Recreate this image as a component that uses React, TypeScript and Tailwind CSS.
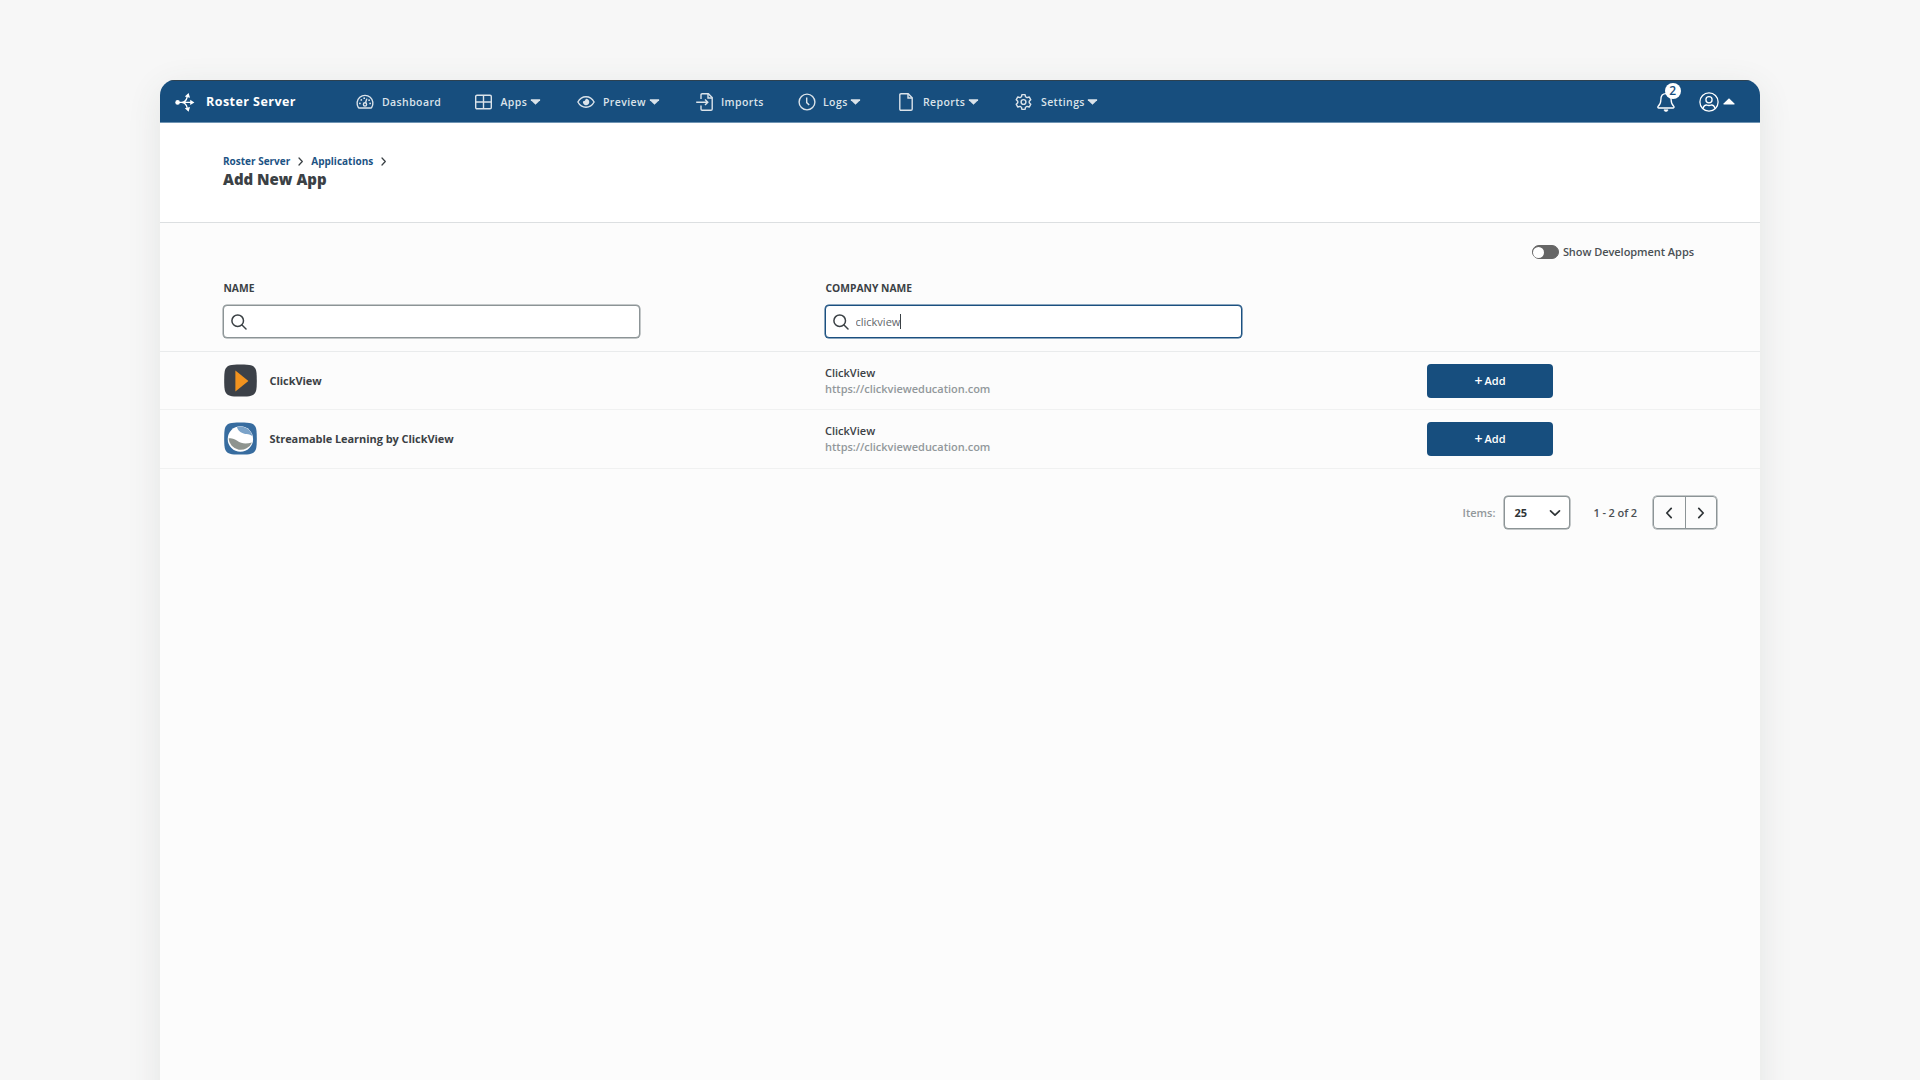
import { useState } from "react";
import type { ReactNode } from "react";
import clsx from "clsx";

interface NavItem {
  label: string;
  icon: ReactNode;
  hasMenu?: boolean;
  width: string;
  iconBox: string;
}

interface AppRow {
  name: string;
  company: string;
  url: string;
  logo: ReactNode;
}

function Caret({ up = false, className }: { up?: boolean; className?: string }) {
  return (
    <svg viewBox="0 0 12 7" className={clsx("shrink-0", className)} fill="currentColor">
      {up ? (
        <path d="M6 0.2 11.4 5.4Q11.8 6.6 11 6.6H1Q0.2 6.6 0.6 5.4Z" />
      ) : (
        <path d="M6 6.8 0.6 1.6Q0.2 0.4 1 0.4H11Q11.8 0.4 11.4 1.6Z" />
      )}
    </svg>
  );
}

function Chevron({ d, className }: { d: string; className?: string }) {
  return (
    <svg
      viewBox="0 0 12 12"
      className={clsx("shrink-0", className)}
      fill="none"
      stroke="currentColor"
      strokeWidth="1.7"
      strokeLinecap="round"
      strokeLinejoin="round"
    >
      <path d={d} />
    </svg>
  );
}

const RIGHT = "M4 1.4 8.4 6 4 10.6";

function BrandIcon() {
  return (
    <svg width="20" height="20" viewBox="0 0 20 20" fill="none" stroke="white" strokeWidth="1.3">
      <path d="M3 10.4H16M6.8 10.4C10 10 11.4 8.4 12.2 5M6.8 10.4C10 10.8 11.4 12.4 12.2 15.8" />
      <circle cx="2.6" cy="10.4" r="2.3" fill="white" stroke="none" />
      <path
        d="M9.8 4.6 13.6 1 15 5.8ZM9.8 16.2 13.6 19.8 15 15ZM15.2 7.7 19.4 10.4 15.2 13.1Z"
        fill="white"
        stroke="none"
      />
    </svg>
  );
}

function DashboardIcon() {
  return (
    <svg width="18" height="15" viewBox="0 0 18 15" fill="none" stroke="currentColor" strokeWidth="1.4">
      <path d="M2.4 13.6A7.9 7.9 0 1 1 15.6 13.6Q15.4 14 14.9 14H3.1Q2.6 14 2.4 13.6Z" />
      <circle cx="9" cy="10.4" r="1.6" />
      <path d="M9.5 8.8 10.9 4.6" />
      <g fill="currentColor" stroke="none">
        <circle cx="3.9" cy="9.4" r="0.9" />
        <circle cx="5.3" cy="5.9" r="0.9" />
        <circle cx="8.2" cy="4.2" r="0.9" />
        <circle cx="13.1" cy="6.2" r="0.9" />
        <circle cx="14.1" cy="9.4" r="0.9" />
      </g>
    </svg>
  );
}

function GridIcon() {
  return (
    <svg width="17" height="16" viewBox="0 0 17 16" fill="none" stroke="currentColor" strokeWidth="1.4">
      <rect x="0.7" y="1.2" width="15.6" height="13.6" rx="1.3" />
      <path d="M8.5 1.2V14.8M0.7 8H16.3" />
    </svg>
  );
}

function EyeIcon() {
  return (
    <svg width="18" height="12" viewBox="0 0 18 12" fill="none" stroke="currentColor" strokeWidth="1.4">
      <path d="M0.9 6C2.6 2.8 5.5 0.8 9 0.8S15.4 2.8 17.1 6C15.4 9.2 12.5 11.2 9 11.2S2.6 9.2 0.9 6Z" />
      <path d="M9 2.8A3.2 3.2 0 1 1 6 5.2Q7.6 5.4 8 4.6 8.3 3.8 9 2.8Z" fill="currentColor" stroke="none" />
    </svg>
  );
}

function ImportIcon() {
  return (
    <svg width="17" height="18" viewBox="0 0 17 18" fill="none" stroke="currentColor" strokeWidth="1.4">
      <path d="M5 6V2Q5 0.8 6.2 0.8H12.4L16.2 4.6V16Q16.2 17.2 15 17.2H6.2Q5 17.2 5 16V12.4" />
      <path d="M12 1V5H16M0.2 9.3H11.4M9 6.6 11.8 9.3 9 12" />
    </svg>
  );
}

function ClockIcon() {
  return (
    <svg width="18" height="18" viewBox="0 0 18 18" fill="none" stroke="currentColor" strokeWidth="1.4">
      <circle cx="9" cy="9" r="7.9" />
      <path d="M8.7 4.4V9.6L11.2 12" />
    </svg>
  );
}

function FileIcon() {
  return (
    <svg width="14" height="18" viewBox="0 0 14 18" fill="none" stroke="currentColor" strokeWidth="1.4">
      <path d="M2 0.8H9.2L13.2 4.8V16Q13.2 17.2 12 17.2H2Q0.8 17.2 0.8 16V2Q0.8 0.8 2 0.8Z" />
      <path d="M9 1V5H13" />
    </svg>
  );
}

function GearIcon() {
  return (
    <svg
      width="17"
      height="18"
      viewBox="0 0 24 24"
      fill="none"
      stroke="currentColor"
      strokeWidth="2"
      strokeLinejoin="round"
    >
      <path d="M9.8 1.6H14.2L14.9 4.6 17 5.8 20 4.9 22.2 8.7 20.1 10.9V13.1L22.2 15.3 20 19.1 17 18.2 14.9 19.4 14.2 22.4H9.8L9.1 19.4 7 18.2 4 19.1 1.8 15.3 3.9 13.1V10.9L1.8 8.7 4 4.9 7 5.8 9.1 4.6Z" />
      <circle cx="12" cy="12" r="3.4" />
    </svg>
  );
}

function BellIcon() {
  return (
    <svg width="18" height="20" viewBox="0 0 18 20" fill="none" stroke="white" strokeWidth="1.3">
      <path d="M9 1.6C5.4 1.6 3.9 4.2 3.9 7.4 3.9 11.6 2.6 13 1 14.4 0.6 15.4 1 16 1.8 16H16.2Q17.4 15.8 16.9 14.4C15.4 13 14.1 11.6 14.1 7.4 14.1 4.2 12.6 1.6 9 1.6Z" />
      <path d="M7 17.8A2 1.7 0 0 0 11 17.8Z" fill="white" strokeWidth="0.6" />
    </svg>
  );
}

function UserIcon() {
  return (
    <svg width="20" height="20" viewBox="0 0 20 20" fill="none" stroke="white" strokeWidth="1.3">
      <circle cx="10" cy="10" r="9.1" />
      <circle cx="10" cy="7.8" r="3.1" />
      <path d="M4 16.6C4.6 14 6 13 7.6 13 9.2 13.7 10.8 13.7 12.4 13 14 13 15.4 14 16 16.6" />
    </svg>
  );
}

function SearchIcon() {
  return (
    <svg
      width="16"
      height="16"
      viewBox="0 0 16 16"
      fill="none"
      stroke="#3b4145"
      strokeWidth="1.5"
      strokeLinecap="round"
    >
      <circle cx="6.7" cy="6.7" r="5.8" />
      <path d="M11 11 15 15" />
    </svg>
  );
}

// Rounded-square tile shared by both app logos
const TILE =
  "M16.5 0.4C27 0.4 29 1.2 31 4 32.2 6 32.8 8 32.8 16.5 32.8 25 32.2 27 31 29 29 31.8 27 32.6 16.5 32.6 6 32.6 4 31.8 2 29 0.8 27 0.2 25 0.2 16.5 0.2 8 0.8 6 2 4 4 1.2 6 0.4 16.5 0.4Z";

function ClickViewLogo() {
  return (
    <svg width="33" height="33" viewBox="0 0 33 33">
      <path d={TILE} fill="#3c4148" />
      <path d="M11.4 6.6 24.4 17 11.4 27.6Z" fill="#f2931e" />
    </svg>
  );
}

function StreamableLogo() {
  return (
    <svg width="33" height="33" viewBox="0 0 33 33">
      <path d={TILE} fill="#376c9f" />
      <circle cx="16.4" cy="17" r="12.7" fill="#ffffff" />
      <path d="M13 5A12.4 12.4 0 0 1 28.4 14.2C26 11.8 22.4 12.6 19 11.2 15.8 10 13.4 8 13 5Z" fill="#7ba3c9" />
      <path d="M4.6 16.4C7.4 15.8 10.4 16.8 13.2 18.8 17.4 21.8 22 22.2 28 20.4A12.2 12.2 0 0 1 4.6 16.4Z" fill="#8e948f" />
    </svg>
  );
}

const NAV_ITEMS: NavItem[] = [
  { label: "Dashboard", icon: <DashboardIcon />, width: "w-[119px]", iconBox: "w-[26px]" },
  { label: "Apps", icon: <GridIcon />, hasMenu: true, width: "w-[102px]", iconBox: "w-[25.5px]" },
  { label: "Preview", icon: <EyeIcon />, hasMenu: true, width: "w-[119px]", iconBox: "w-[26px]" },
  { label: "Imports", icon: <ImportIcon />, width: "w-[102px]", iconBox: "w-[25px]" },
  { label: "Logs", icon: <ClockIcon />, hasMenu: true, width: "w-[101px]", iconBox: "w-[25px]" },
  { label: "Reports", icon: <FileIcon />, hasMenu: true, width: "w-[116px]", iconBox: "w-[24px]" },
  { label: "Settings", icon: <GearIcon />, hasMenu: true, width: "w-[100px]", iconBox: "w-[26px]" },
];

const ROWS: AppRow[] = [
  {
    name: "ClickView",
    company: "ClickView",
    url: "https://clickvieweducation.com",
    logo: <ClickViewLogo />,
  },
  {
    name: "Streamable Learning by ClickView",
    company: "ClickView",
    url: "https://clickvieweducation.com",
    logo: <StreamableLogo />,
  },
];

function TopBar() {
  return (
    <header className="flex h-[43px] items-center border-t border-b border-t-[#2d4150] border-b-[#6f94b3] bg-[#174e7e] pl-[15px] text-white">
      <BrandIcon />
      <span className="ml-[11px] w-[150px] text-[12.5px] leading-4 font-bold tracking-[0.45px]">Roster Server</span>
      <nav className="flex flex-1 items-center text-[#dbe3ea]">
        {NAV_ITEMS.map((item) => (
          <div key={item.label} className={clsx("flex items-center", item.width)}>
            <span className={clsx("shrink-0", item.iconBox)}>{item.icon}</span>
            <span className="text-[10.5px] leading-4 font-semibold tracking-[0.4px]">{item.label}</span>
            {item.hasMenu && <Caret className="ml-[2.5px] h-[6px] w-[11px]" />}
          </div>
        ))}
      </nav>
      <div className="relative">
        <BellIcon />
        <span className="absolute -top-[8.5px] left-[8px] flex size-[15.5px] items-center justify-center rounded-full bg-white text-[12px] leading-none font-semibold text-[#174e7e]">
          2
        </span>
      </div>
      <div className="mr-[25px] ml-[24px] flex items-center gap-[4px]">
        <UserIcon />
        <Caret up className="h-[7px] w-[12px]" />
      </div>
    </header>
  );
}

function PageHeader() {
  return (
    <div className="h-[100px] border-b border-[#dcdfe1] bg-white pt-[31px] pl-[63px]">
      <div className="flex items-center text-[10px] leading-[15px] font-bold text-[#1c5384]">
        <span>Roster Server</span>
        <Chevron d={RIGHT} className="mx-[6px] size-[9px] text-[#3b4145]" />
        <span>Applications</span>
        <Chevron d={RIGHT} className="mx-[6px] size-[9px] text-[#3b4145]" />
      </div>
      <h1 className="text-[15px] leading-5 font-extrabold text-[#3b4145]">Add New App</h1>
    </div>
  );
}

interface FilterProps {
  label: string;
  value: string;
  onChange: (value: string) => void;
  focused?: boolean;
}

function Filter({ label, value, onChange, focused }: FilterProps) {
  return (
    <label className="flex w-[602px] flex-col">
      <span className="pl-[0.5px] text-[10.3px] leading-[14px] font-bold text-[#3b4145]">{label}</span>
      <span
        className={clsx(
          "mt-[10px] flex h-[33px] w-[417px] items-center rounded-[4px] border bg-white pl-[7px]",
          focused ? "border-[#1b5080] ring-[0.5px] ring-[#1b5080]" : "border-[#8c9496] ring-[0.5px] ring-[#8c9496]"
        )}
      >
        <SearchIcon />
        <span className="relative ml-[6.5px] flex-1">
          <input
            type="text"
            value={value}
            onChange={(e) => onChange(e.target.value)}
            className="block w-full text-[11px] leading-4 text-[#5f666b] outline-none"
          />
          {focused && <span className="absolute top-0 left-[44.5px] h-[15px] w-px bg-[#3b4145]" />}
        </span>
      </span>
    </label>
  );
}

export default function App() {
  const [name, setName] = useState("");
  const [company, setCompany] = useState("clickview");
  const [showDev, setShowDev] = useState(false);

  return (
    <div className="h-[1080px] w-[1920px] overflow-hidden bg-[#f7f7f7] px-[160px] pt-[80px] font-['Open_Sans',sans-serif]">
      <main className="h-[1100px] overflow-hidden rounded-t-[15px] bg-[#fcfcfc] shadow-[0_8px_34px_rgba(60,80,70,0.11)]">
        <TopBar />
        <PageHeader />

        <div className="flex justify-end pt-[21px] pr-[66px] pb-px">
          <button type="button" onClick={() => setShowDev(!showDev)} className="flex items-center">
            <span
              className={clsx(
                "flex h-[14px] w-[27px] items-center rounded-full border-[1.5px] border-[#666666] bg-[#666666]",
                showDev && "justify-end"
              )}
            >
              <span className="size-[11px] rounded-full bg-white" />
            </span>
            <span className="ml-[4px] text-[11px] leading-4 font-semibold tracking-[-0.05px] text-[#4a5054]">
              Show Development Apps
            </span>
          </button>
        </div>

        <div className="flex h-[91px] border-b border-[#e9ebec] pt-[20px] pl-[63px]">
          <Filter label="NAME" value={name} onChange={setName} />
          <Filter label="COMPANY NAME" value={company} onChange={setCompany} focused />
        </div>

        {ROWS.map((row) => (
          <div key={row.name} className="flex h-[58.25px] items-center border-b border-[#f0f1f1] pl-[64px]">
            <div className="flex w-[601px] items-center gap-[12.5px]">
              {row.logo}
              <span className="text-[11px] leading-4 font-bold tracking-[-0.06px] text-[#3b4145]">{row.name}</span>
            </div>
            <div className="w-[602px] text-[11px] leading-4">
              <p className="font-semibold text-[#3b4145]">{row.company}</p>
              <p className="font-semibold tracking-[-0.02px] text-[#92989b]">{row.url}</p>
            </div>
            <button
              type="button"
              className="flex h-[34px] w-[126px] items-center justify-center gap-[2px] rounded-[4px] bg-[#174e7e] text-[11px] leading-4 font-semibold text-white"
            >
              <span className="text-[14px]">+</span>
              <span>Add</span>
            </button>
          </div>
        ))}

        <div className="flex items-center justify-end pt-[27.5px] pr-[43px] text-[11px] leading-4">
          <span className="font-semibold text-[#92989b]">Items:</span>
          <button
            type="button"
            className="ml-[9px] flex h-[33px] w-[66px] items-center justify-between rounded-[4px] border border-[#8c9496] bg-white pr-[8px] pl-[9px] font-bold text-[#2f3437] ring-[0.5px] ring-[#8c9496]"
          >
            25
            <Chevron d="M1.5 3.8 6 8.2 10.5 3.8" className="size-[12px]" />
          </button>
          <span className="mr-[16px] ml-[23px] font-semibold tracking-[-0.1px] text-[#4a5054]">1 - 2 of 2</span>
          <div className="flex h-[33px] w-[64px] rounded-[4px] border border-[#8c9496] text-[#2f3437] ring-[0.5px] ring-[#8c9496]">
            <button type="button" className="flex flex-1 items-center justify-center border-r border-[#8c9496]">
              <Chevron d="M8.2 1.4 3.8 6 8.2 10.6" className="size-[12px]" />
            </button>
            <button type="button" className="flex flex-1 items-center justify-center">
              <Chevron d="M3.8 1.4 8.2 6 3.8 10.6" className="size-[12px]" />
            </button>
          </div>
        </div>
      </main>
    </div>
  );
}
